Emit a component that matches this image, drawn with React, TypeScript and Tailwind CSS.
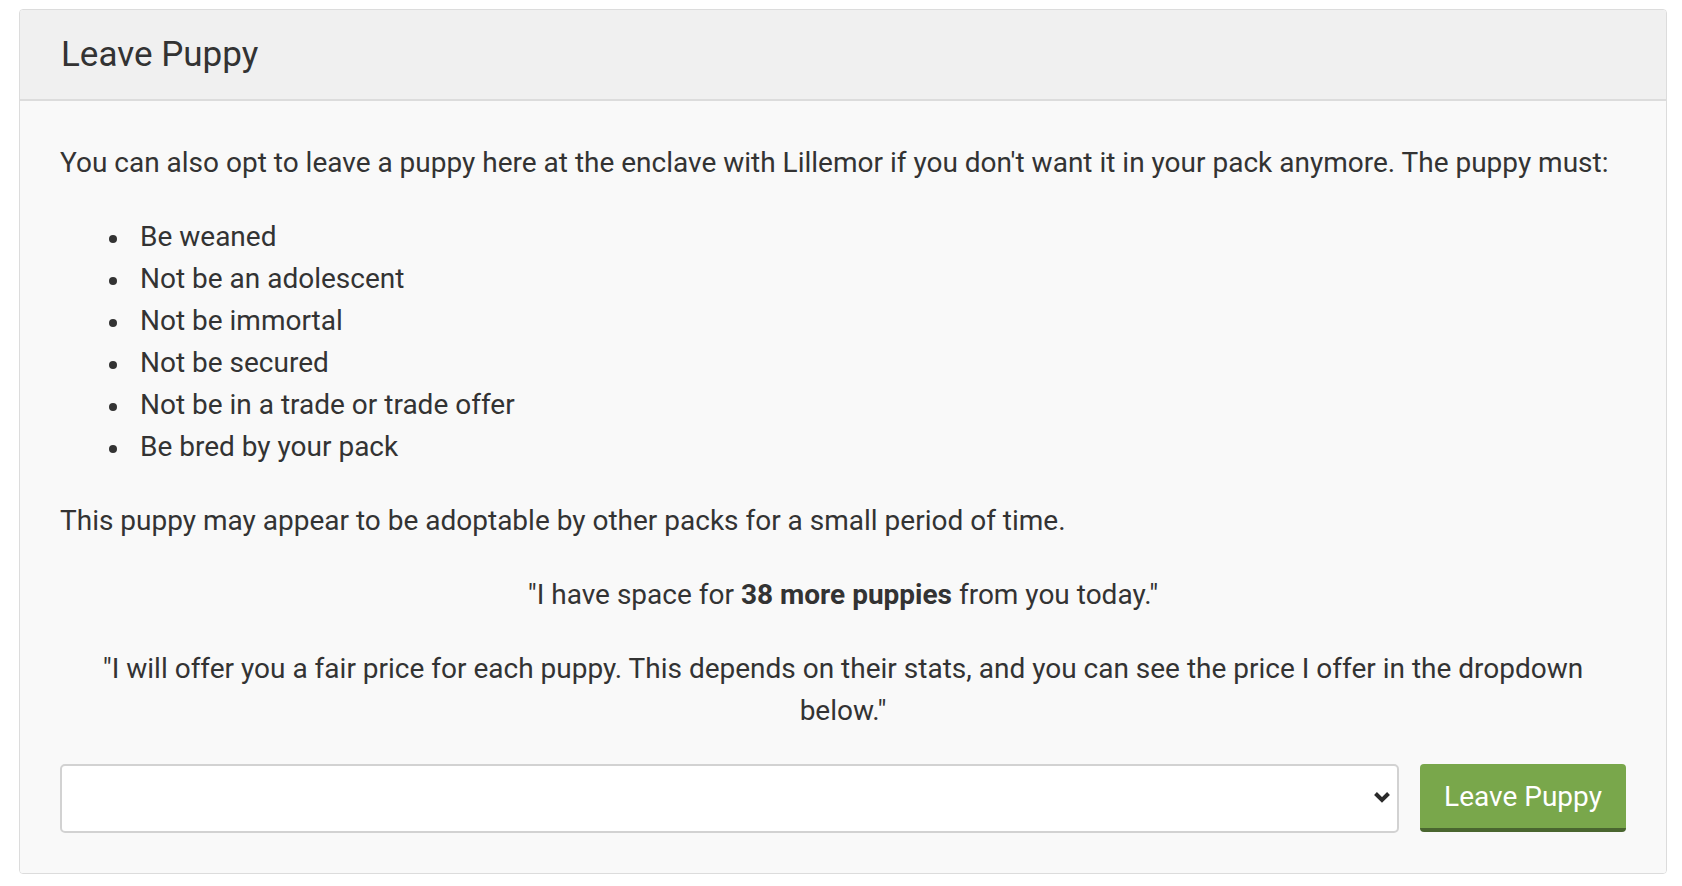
import { useState } from "react";

const rules = [
  "Be weaned",
  "Not be an adolescent",
  "Not be immortal",
  "Not be secured",
  "Not be in a trade or trade offer",
  "Be bred by your pack",
];

const App = () => {
  const [puppy, setPuppy] = useState("");

  return (
    <div className="min-h-screen bg-white pt-[9px] pl-[19px] pr-[15px] font-['Roboto',sans-serif] text-[#333]">
      <div className="w-[1648px] rounded-[4px] border border-[#dcdcdc] overflow-hidden">
        {/* Header */}
        <div className="bg-[#f0f0f0] border-b-2 border-[#dcdcdc] px-[41px] pt-[24px] pb-[23px]">
          <h2 className="text-[35px] leading-[1.2]">Leave Puppy</h2>
        </div>

        {/* Body */}
        <div className="bg-[#f9f9f9] px-[40px] pt-[41px] pb-[40px] text-[28px] leading-[42px]">
          <p className="mb-[32px]">
            You can also opt to leave a puppy here at the enclave with Lillemor if you don't want it in
            your pack anymore. The puppy must:
          </p>
          <ul className="pl-[49px] mb-[32px]">
            {rules.map((rule) => (
              <li key={rule} className="flex items-center">
                <span className="w-[31px] shrink-0 pt-[3px]">
                  <span className="block w-[8px] h-[8px] rounded-full bg-[#333]" />
                </span>
                <span>{rule}</span>
              </li>
            ))}
          </ul>
          <p className="mb-[32px]">
            This puppy may appear to be adoptable by other packs for a small period of time.
          </p>
          <p className="mb-[32px] text-center">
            "I have space for <b>38 more puppies</b> from you today."
          </p>
          <p className="mb-[32px] text-center">
            "I will offer you a fair price for each puppy. This depends on their stats, and you can see
            the price I offer in the dropdown below."
          </p>

          <div className="flex gap-[21px] items-start">
            <div className="relative flex-1">
              <select
                value={puppy}
                onChange={(e) => setPuppy(e.target.value)}
                className="appearance-none w-full h-[69px] bg-white border-2 border-[#d2d2d2] rounded-[5px] px-4 text-[28px] outline-none"
              >
                <option value=""></option>
              </select>
              <svg
                className="absolute right-[8px] top-[26px] pointer-events-none"
                width="18"
                height="14"
                viewBox="0 0 18 14"
              >
                <polyline
                  points="2.5,3.5 9,10 15.5,3.5"
                  fill="none"
                  stroke="#2a2a2a"
                  strokeWidth="4"
                />
              </svg>
            </div>
            <button
              type="button"
              className="w-[206px] h-[68px] bg-[#79a74b] border-b-4 border-[#4a6630] rounded-[4px] text-white text-[28px] leading-none pt-[2px]"
            >
              Leave Puppy
            </button>
          </div>
        </div>
      </div>
    </div>
  );
};

export default App;
